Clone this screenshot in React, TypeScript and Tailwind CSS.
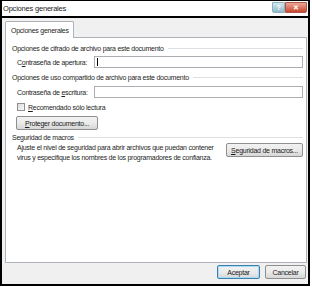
import React from "react";

const font = { fontFamily: '"Liberation Sans", Arial, sans-serif' };

function Section({ title }: { title: string }) {
  return (
    <div className="flex items-center gap-[4px] h-[10px]">
      <span className="whitespace-nowrap">{title}</span>
      <div className="flex-1 h-px bg-[#dcdfe3]" />
    </div>
  );
}

function Btn({ children, w, primary }: { children: React.ReactNode; w: string; primary?: boolean }) {
  return (
    <div
      className={`${w} h-[14px] shrink-0 whitespace-nowrap flex items-center justify-center rounded-[2px] border ${
        primary ? "border-[#3c7fb1] shadow-[inset_0_0_0_1px_#a8dcf4]" : "border-[#8e8f8f]"
      } bg-gradient-to-b from-[#f2f2f2] via-[#ebebeb] to-[#d6d6d6] text-[#1a1a1a]`}
    >
      {children}
    </div>
  );
}

export default function App() {
  return (
    <div
      className="w-[312px] h-[287px] bg-white text-[7px] tracking-[-0.25px] text-[#1e1e1e] leading-none overflow-hidden whitespace-nowrap"
      style={font}
    >
      <div className="w-[310px] h-[286px] border-2 border-t border-black flex flex-col bg-[#f0f0f0]">
        {/* Title bar */}
        <div className="h-[17px] shrink-0 bg-white border-b-2 border-black flex items-start justify-between pl-[1px]">
          <span className="text-[7.5px] tracking-[-0.2px] mt-[4px] text-[#222]">Opciones generales</span>
          <div className="flex mr-[1px] mt-[1px]">
            <div className="w-[13px] h-[11px] bg-gradient-to-b from-[#d3e8ee] to-[#8fbccb] border border-[#8fb0be] rounded-bl-[2px] flex items-center justify-center text-[7px] text-white font-bold">
              ?
            </div>
            <div className="w-[22px] h-[11px] bg-gradient-to-b from-[#eca595] to-[#c9442c] border border-[#b0564a] rounded-br-[2px] flex items-center justify-center text-[7px] text-white font-bold">
              ✕
            </div>
          </div>
        </div>
        {/* Body */}
        <div className="flex-1 flex flex-col pl-[3px] pr-[1px] pt-[2px]">
          <div className="flex">
            <div className="h-[17px] w-[69px] bg-white border border-b-0 border-[#aeb3b9] rounded-t-[2px] flex items-center pl-[5px] relative top-[1px] z-10">
              Opciones generales
            </div>
          </div>
          <div className="h-[226px] bg-white border border-[#aeb3b9] pl-[6px] pr-[3px] pt-[5px] flex flex-col">
            <Section title="Opciones de cifrado de archivo para este documento" />
            <div className="flex items-center mt-[3px] pl-[5px]">
              <span className="w-[77px]">
                C<span className="underline">o</span>ntraseña de apertura:
              </span>
              <div className="flex-1 h-[12px] border border-[#abadb3] bg-white flex items-center pl-[2px]">
                <div className="w-px h-[8px] bg-black" />
              </div>
            </div>
            <div className="mt-[4px]">
              <Section title="Opciones de uso compartido de archivo para este documento" />
            </div>
            <div className="flex items-center mt-[4px] pl-[5px]">
              <span className="w-[77px]">
                Contraseña de <span className="underline">e</span>scritura:
              </span>
              <div className="flex-1 h-[12px] border border-[#abadb3] bg-white" />
            </div>
            <div className="flex items-center h-[10px] mt-[4px] pl-[5px] gap-[3px]">
              <div className="w-[8px] h-[8px] border border-[#8e8f8f] bg-gradient-to-br from-[#dcdcdc] to-[#f8f8f8]" />
              <span>
                <span className="underline">R</span>ecomendado sólo lectura
              </span>
            </div>
            <div className="mt-[4px] pl-[4px]">
              <Btn w="w-[82px]">
                <span>
                  <span className="underline">P</span>roteger documento...
                </span>
              </Btn>
            </div>
            <div className="mt-[2px]">
              <Section title="Seguridad de macros" />
            </div>
            <div className="flex items-start mt-[1px] pl-[5px] justify-between">
              <div className="leading-[10px]">
                <div>Ajuste el nivel de seguridad para abrir archivos que puedan contener</div>
                <div>virus y especifique los nombres de los programadores de confianza.</div>
              </div>
              <Btn w="w-[77px]">
                <span>
                  <span className="underline">S</span>eguridad de macros...
                </span>
              </Btn>
            </div>
          </div>
          <div className="flex justify-end gap-[5px] mt-[2px] pr-[1px]">
            <Btn w="w-[43px]" primary>
              Aceptar
            </Btn>
            <Btn w="w-[41px]">Cancelar</Btn>
          </div>
        </div>
      </div>
    </div>
  );
}
